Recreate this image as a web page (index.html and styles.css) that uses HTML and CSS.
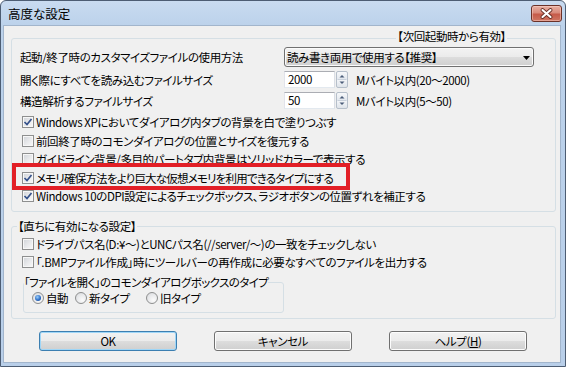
FILE: index.html
```html
<!DOCTYPE html>
<html lang="ja">
<head>
<meta charset="utf-8">
<title>高度な設定</title>
<link rel="stylesheet" href="styles.css">
</head>
<body>
<div class="window">
  <div class="titlebar">
    <span class="title">高度な設定</span>
    <span class="close">
      <svg width="13" height="11" viewBox="0 0 13 11"><path d="M2.5 2 L10.5 9 M10.5 2 L2.5 9" stroke="#6a3027" stroke-width="3.8" stroke-linecap="round"/><path d="M2.5 2 L10.5 9 M10.5 2 L2.5 9" stroke="#ffffff" stroke-width="2.1" stroke-linecap="round"/></svg>
    </span>
  </div>
  <div class="client">
    <div class="group g1">
      <span class="legend legend-right">【次回起動時から有効】</span>
      <div class="form">
        <span class="label">起動/終了時のカスタマイズファイルの使用方法</span>
        <div class="combo">
          <span class="combo-text">読み書き両用で使用する【推奨】</span>
          <svg class="combo-arrow" width="7" height="4" viewBox="0 0 7 4"><path d="M0 0 H7 L3.5 4Z" fill="#000"/></svg>
        </div>
        <span class="label">開く際にすべてを読み込むファイルサイズ</span>
        <div class="spinrow">
          <span class="edit">2000</span>
          <span class="spin">
            <svg width="10" height="15" viewBox="0 0 10 15"><path d="M0.5 7.5 H9.5" stroke="#c9d1db"/><path d="M2.5 5.5 L5 3 L7.5 5.5Z" fill="#4b5c78"/><path d="M2.5 9.5 L5 12 L7.5 9.5Z" fill="#4b5c78"/></svg>
          </span>
          <span class="unit">Mバイト以内(20～2000)</span>
        </div>
        <span class="label">構造解析するファイルサイズ</span>
        <div class="spinrow">
          <span class="edit">50</span>
          <span class="spin">
            <svg width="10" height="15" viewBox="0 0 10 15"><path d="M0.5 7.5 H9.5" stroke="#c9d1db"/><path d="M2.5 5.5 L5 3 L7.5 5.5Z" fill="#4b5c78"/><path d="M2.5 9.5 L5 12 L7.5 9.5Z" fill="#4b5c78"/></svg>
          </span>
          <span class="unit">Mバイト以内(5～50)</span>
        </div>
      </div>
      <ul class="checks">
        <li class="check"><span class="cb"><svg width="10" height="10" viewBox="0 0 10 10"><path d="M1.5 5 L4 7.5 L8.5 2" fill="none" stroke="#34508a" stroke-width="1.7"/></svg></span>Windows XPにおいてダイアログ内タブの背景を白で塗りつぶす</li>
        <li class="check"><span class="cb"></span>前回終了時のコモンダイアログの位置とサイズを復元する</li>
        <li class="check"><span class="cb"></span>ガイドライン背景/多目的パートタブ内背景はソリッドカラーで表示する</li>
        <li class="check tight"><span class="cb"><svg width="10" height="10" viewBox="0 0 10 10"><path d="M1.5 5 L4 7.5 L8.5 2" fill="none" stroke="#34508a" stroke-width="1.7"/></svg></span>メモリ確保方法をより巨大な仮想メモリを利用できるタイプにする</li>
        <li class="check"><span class="cb"><svg width="10" height="10" viewBox="0 0 10 10"><path d="M1.5 5 L4 7.5 L8.5 2" fill="none" stroke="#34508a" stroke-width="1.7"/></svg></span>Windows 10のDPI設定によるチェックボックス、ラジオボタンの位置ずれを補正する</li>
      </ul>
    </div>

    <div class="group g2">
      <span class="legend legend-left">【直ちに有効になる設定】</span>
      <ul class="checks checks2">
        <li class="check check2"><span class="cb"></span>ドライブパス名(D:¥～)とUNCパス名(//server/～)の一致をチェックしない</li>
        <li class="check check2"><span class="cb"></span>「.BMPファイル作成」時にツールバーの再作成に必要なすべてのファイルを出力する</li>
      </ul>
      <div class="group g3">
        <span class="legend legend-inner">「ファイルを開く」のコモンダイアログボックスのタイプ</span>
        <div class="radios">
          <label class="radio"><span class="rb on"></span>自動</label>
          <label class="radio"><span class="rb"></span>新タイプ</label>
          <label class="radio"><span class="rb"></span>旧タイプ</label>
        </div>
      </div>
    </div>

    <div class="buttons">
      <button class="btn btn-default">OK</button>
      <button class="btn">キャンセル</button>
      <button class="btn">ヘルプ(<u>H</u>)</button>
    </div>
  </div>
  <div class="annot"></div>
</div>
</body>
</html>
```

FILE: styles.css
```css
html, body {
  margin: 0;
  padding: 0;
  background: #ffffff;
}

body {
  font-family: "Noto Sans CJK JP", "Noto Sans", sans-serif;
  font-size: 11.5px;
  font-weight: 400;
  letter-spacing: -0.4px;
  color: #000;
  font-feature-settings: "palt";
}

.window {
  position: relative;
  width: 566px;
  height: 367px;
  box-sizing: border-box;
  border: 1px solid #4d5d73;
  border-radius: 6px 6px 0 0;
  background: linear-gradient(#c9dbf0, #bcd2eb 24px, #b9cfe9);
  padding: 0 4px 3px 2px;
  display: flex;
  flex-direction: column;
}

.titlebar {
  height: 24px;
  flex: none;
  display: flex;
  justify-content: space-between;
  align-items: flex-start;
}

.title {
  margin: 5px 0 0 5px;
  line-height: 16px;
  font-size: 12.5px;
  font-weight: 400;
  letter-spacing: 0;
}

.close {
  margin: 4px -1px 0 0;
  width: 31px;
  height: 17px;
  box-sizing: border-box;
  border: 1px solid #6b3128;
  border-radius: 3px;
  background: linear-gradient(#e7b0a3 0%, #d98a7b 45%, #c65a49 55%, #cf7663 100%);
  box-shadow: inset 0 0 0 1px rgba(255, 220, 210, 0.45);
  display: flex;
  align-items: center;
  justify-content: center;
}

.client {
  flex: 1;
  background: #f0f0f0;
  border: 1px solid #a2b5cc;
  padding: 0 4px 0 7px;
  display: flex;
  flex-direction: column;
}

.group {
  position: relative;
  box-sizing: border-box;
  border: 1px solid #d5dfe5;
  border-radius: 3px;
}

.g1 {
  margin-top: 12px;
  height: 174px;
  padding-left: 8px;
}

.legend {
  position: absolute;
  background: #f0f0f0;
  line-height: 14px;
  white-space: nowrap;
}

.legend-right {
  top: -10px;
  right: 48px;
  padding: 0 1px;
}

.form {
  display: grid;
  grid-template-columns: 264px auto;
  grid-template-rows: 20px 17px 17px;
  row-gap: 4px;
  align-items: center;
  margin-top: 8px;
}

.label {
  white-space: nowrap;
  line-height: 14px;
}

.combo {
  width: 250px;
  height: 20px;
  box-sizing: border-box;
  border: 1px solid #707070;
  border-radius: 3px;
  background: linear-gradient(#f3f3f3 0%, #ebebeb 50%, #dddddd 51%, #cfcfcf 100%);
  box-shadow: inset 0 0 0 1px #fbfbfb;
  display: flex;
  align-items: center;
  justify-content: space-between;
  padding: 0 3px 0 2px;
}

.combo-text {
  line-height: 14px;
  white-space: nowrap;
}

.combo-arrow {
  margin-top: 2px;
}

.spinrow {
  display: flex;
  align-items: center;
  height: 17px;
}

.edit {
  width: 51px;
  height: 17px;
  box-sizing: border-box;
  border: 1px solid #abadb3;
  border-color: #abadb3 #dbdfe6 #e3e9ef #e2e3ea;
  background: #fff;
  padding-left: 3px;
  line-height: 15px;
}

.spin {
  width: 12px;
  height: 17px;
  box-sizing: border-box;
  margin-left: 1px;
  border: 1px solid #b6bfca;
  border-radius: 2px;
  background: linear-gradient(#f7f8fa, #e3e8ee 48%, #f3f5f8 52%, #dfe4ea);
  display: flex;
}

.unit {
  margin-left: 8px;
  white-space: nowrap;
  line-height: 14px;
}

.checks {
  list-style: none;
  margin: 4px 0 0 2px;
  padding: 0;
}

.check {
  display: flex;
  align-items: center;
  height: 18.5px;
  white-space: nowrap;
  line-height: 14px;
}

.check.tight {
  letter-spacing: -0.8px;
}

.cb {
  width: 12px;
  height: 12px;
  flex: none;
  box-sizing: border-box;
  border: 1px solid #8e8f8f;
  background: linear-gradient(135deg, #d0d3d8 0%, #e9eaec 55%, #fafafa 100%);
  box-shadow: inset 0 0 0 1px #f7f7f7;
  margin-right: 2px;
  display: flex;
  align-items: center;
  justify-content: center;
}

.g2 {
  margin-top: 14px;
  height: 93px;
  padding: 8px 0 0 10px;
}

.legend-left {
  top: -8px;
  left: 5px;
  padding: 0 1px;
}

.checks2 {
  margin: 0;
}

.check2 {
  height: 18px;
}

.g3 {
  margin: 11px 0 0 1px;
  width: 261px;
  height: 31px;
  padding: 8px 0 0 8px;
}

.legend-inner {
  top: -8px;
  left: 0;
  letter-spacing: -0.6px;
}

.radios {
  display: flex;
  align-items: center;
  height: 14px;
}

.radio {
  display: flex;
  align-items: center;
  white-space: nowrap;
  line-height: 14px;
}

.radio:nth-child(1) {
  width: 43px;
}

.radio:nth-child(2) {
  width: 71px;
}

.rb {
  position: relative;
  width: 12px;
  height: 12px;
  flex: none;
  box-sizing: border-box;
  border: 1px solid #8e8f8f;
  border-radius: 50%;
  background: radial-gradient(circle at 65% 70%, #fbfbfb 0%, #e6e7e9 60%, #d2d4d8 100%);
  margin-right: 2px;
}

.rb.on::after {
  content: "";
  position: absolute;
  left: 2px;
  top: 2px;
  width: 6px;
  height: 6px;
  border-radius: 50%;
  background: radial-gradient(circle at 40% 35%, #9cd0fa 0%, #2f6fc8 55%, #163f86 100%);
}

.buttons {
  display: flex;
  gap: 37px;
  margin: 12px 0 0 28px;
}

.btn {
  width: 138px;
  height: 20px;
  box-sizing: border-box;
  border: 1px solid #707070;
  border-radius: 3px;
  background: linear-gradient(#f2f2f2 0%, #ebebeb 50%, #dddddd 51%, #cfcfcf 100%);
  box-shadow: inset 0 0 0 1px #fcfcfc;
  font-family: inherit;
  font-size: 11.5px;
  font-weight: 400;
  letter-spacing: -0.4px;
  font-feature-settings: "palt";
  color: #000;
  padding: 0;
  line-height: 14px;
}

.btn-default {
  border-color: #3c7fb1;
  box-shadow: inset 0 0 0 1px #9fd6f7;
}

.annot {
  position: absolute;
  left: 11px;
  top: 162px;
  width: 338px;
  height: 27px;
  box-sizing: border-box;
  border: 4px solid #e21f26;
}
```
